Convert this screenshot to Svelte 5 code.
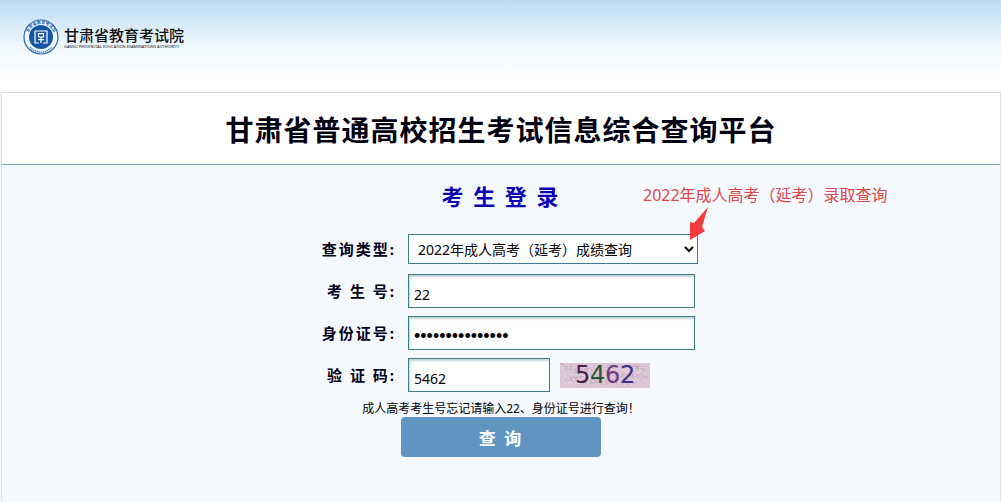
<script>
  let queryType = 'score';
  let examNo = '22';
  let idNumber = '622201199001011';
  let captcha = '5462';

  const queryTypes = [
    { value: 'score', label: '2022年成人高考（延考）成绩查询' },
    { value: 'admission', label: '2022年成人高考（延考）录取查询' }
  ];

  // Digits of the verification image, each with its own ink
  const captchaDigits = [
    { char: '5', x: 15, color: '#4a1f4c' },
    { char: '4', x: 30, color: '#245538' },
    { char: '6', x: 45, color: '#6d3c7c' },
    { char: '2', x: 60, color: '#3a3288' }
  ];

  // Fixed pseudo-random strokes behind the digits
  const noise = Array.from({ length: 150 }, (_, i) => ({
    x: 4 + ((i * 37) % 82),
    y: 2 + ((i * 17 + Math.floor(i / 5) * 3) % 19),
    dx: ((i * 7) % 9) - 4,
    dy: ((i * 5) % 7) - 2,
    color: ['#bfa3b6', '#b5c0ac', '#f2d9ee', '#d6a3c2', '#bdb2c0'][i % 5]
  }));
</script>

<div class="page">
  <header class="site-header">
    <svg class="emblem" viewBox="0 0 36 36" aria-hidden="true">
      <circle cx="18" cy="18" r="17" fill="#eef6fd" stroke="#2e68ae" stroke-width="1.2" />
      <path id="ring" d="M5.2 20 A13 13 0 1 1 30.8 20" fill="none" />
      <text class="ring-text"><textPath href="#ring" startOffset="50%" text-anchor="middle">甘肃省教育考试院</textPath></text>
      <path d="M7 28 A14.5 14.5 0 0 0 29 28" fill="none" stroke="#5e8fc4" stroke-width="1.6" stroke-dasharray="1.4 .6" />
      <circle cx="18" cy="18" r="12" fill="#1755a3" />
      <g fill="none" stroke="#fff" stroke-width="1.2">
        <path d="M16 24H12V12H24V24H20" />
        <path d="M15.5 14.5V18H20.5V14.5M14.8 14.6H21.2M15 20.6H21M18 18V24" />
      </g>
    </svg>
    <div class="brand">
      <span class="brand-name">甘肃省教育考试院</span>
      <span class="brand-sub">GANSU PROVINCIAL EDUCATION EXAMINATIONS AUTHORITY</span>
    </div>
  </header>

  <main>
    <h1>甘肃省普通高校招生考试信息综合查询平台</h1>

    <form on:submit|preventDefault>
      <h2>考 生 登 录</h2>

      <div class="row">
        <label for="type">查询类型:</label>
        <select id="type" bind:value={queryType}>
          {#each queryTypes as type}
            <option value={type.value}>{type.label}</option>
          {/each}
        </select>
      </div>
      <div class="row">
        <label for="exam-no">考 生 号:</label>
        <input id="exam-no" type="text" bind:value={examNo} />
      </div>
      <div class="row">
        <label for="id-number">身份证号:</label>
        <input id="id-number" class="secret" type="password" bind:value={idNumber} />
      </div>
      <div class="row">
        <label for="captcha">验 证 码:</label>
        <input id="captcha" class="short" type="text" bind:value={captcha} />
        <svg class="captcha" viewBox="0 0 90 25" role="img" aria-label="验证码">
          <rect width="90" height="25" fill="#dcc5d6" />
          {#each noise as n}
            <path d="M{n.x} {n.y}l{n.dx} {n.dy}" stroke={n.color} />
          {/each}
          {#each captchaDigits as digit}
            <text x={digit.x} y="20" fill={digit.color}>{digit.char}</text>
          {/each}
        </svg>
      </div>

      <p class="hint">成人高考考生号忘记请输入22、身份证号进行查询！</p>
      <button type="submit">查 询</button>

      <div class="callout">
        <span>2022年成人高考（延考）录取查询</span>
        <svg viewBox="0 0 20 34" aria-hidden="true">
          <path d="M18 0L4 16L0 15V33L15 24L12 20Z" fill="#f23b3b" />
        </svg>
      </div>
    </form>
  </main>
</div>

<style>
  :global(body) {
    margin: 0;
    background: #f5f9fe;
  }

  .page {
    font-family: 'Noto Sans', 'Noto Sans CJK SC', sans-serif;
    color: #000;
  }

  .site-header {
    display: flex;
    align-items: flex-start;
    gap: 5px;
    box-sizing: border-box;
    height: 92px;
    padding: 19px 23px;
    background: linear-gradient(#b9d9f2 0, #d5e9f8 22px, #f3fafe 52px, #fff 80px);
  }

  .emblem {
    width: 36px;
    height: 36px;
  }

  .ring-text {
    font-family: 'Noto Sans CJK SC', sans-serif;
    font-size: 4px;
    font-weight: 700;
    fill: #2e68ae;
  }

  .brand {
    display: flex;
    flex-direction: column;
    padding-top: 7px;
  }

  .brand-name {
    font-size: 15px;
    line-height: 18px;
    font-weight: 500;
    color: #111;
  }

  .brand-sub {
    font-size: 4px;
    line-height: 5px;
    color: #222;
    white-space: nowrap;
  }

  main {
    border: 1px solid #dcdfe3;
    border-width: 1px 1px 0;
    margin-left: 1px;
  }

  h1 {
    margin: 0;
    padding: 19px 0 15px;
    border-bottom: 1px solid #7fa9b5;
    background: #fff;
    color: #000010;
    font-size: 28px;
    line-height: 37px;
    font-weight: 700;
    letter-spacing: 1px;
    text-align: center;
  }

  form {
    position: relative;
    display: flex;
    flex-direction: column;
    align-items: center;
    gap: 8px;
    max-width: 560px;
    margin: 0 auto;
    padding: 14px 0 45px;
  }

  h2 {
    margin: 0 0 10px;
    color: #0d00b4;
    font-size: 22px;
    line-height: 34px;
    font-weight: 700;
    letter-spacing: 2px;
  }

  .row {
    display: flex;
    align-items: center;
    width: 100%;
    min-height: 34px;
  }

  .row:first-of-type {
    margin-top: 1px;
  }

  label {
    width: 175px;
    margin-right: 12px;
    color: #000018;
    font-size: 15px;
    line-height: 20px;
    font-weight: 700;
    letter-spacing: 2px;
    text-align: right;
  }

  input,
  select {
    box-sizing: border-box;
    border: 1px solid #3d7f8c;
    border-radius: 0;
    background-color: #fff;
    color: #000;
    font-family: inherit;
    font-size: 14px;
  }

  input {
    width: 287px;
    height: 34px;
    padding: 6px 5px 0;
    box-shadow: inset 1px 2px 2px #c3d3da;
  }

  select {
    width: 290px;
    height: 30px;
    padding: 0 0 0 5px;
  }

  .secret {
    font-family: 'Liberation Sans', sans-serif;
    font-size: 18px;
  }

  .short {
    width: 142px;
  }

  .captcha {
    width: 90px;
    height: 25px;
    margin-left: 10px;
    overflow: visible;
    font-family: 'DejaVu Sans', sans-serif;
    font-size: 24px;
  }

  .hint {
    margin: 0;
    font-size: 12px;
    line-height: 17px;
  }

  button {
    width: 200px;
    height: 40px;
    margin-top: -8px;
    border: 0;
    border-radius: 4px;
    background: #6095c2;
    color: #fff;
    font-family: inherit;
    font-size: 17px;
    font-weight: 700;
    letter-spacing: 2px;
  }

  /* Note that points at the query type list */
  .callout {
    position: absolute;
    top: 18px;
    left: 422px;
    color: #dc4648;
    font-size: 16px;
    line-height: 24px;
    white-space: nowrap;
    pointer-events: none;
  }

  .callout svg {
    display: block;
    width: 20px;
    height: 34px;
    margin-left: 47px;
  }
</style>
